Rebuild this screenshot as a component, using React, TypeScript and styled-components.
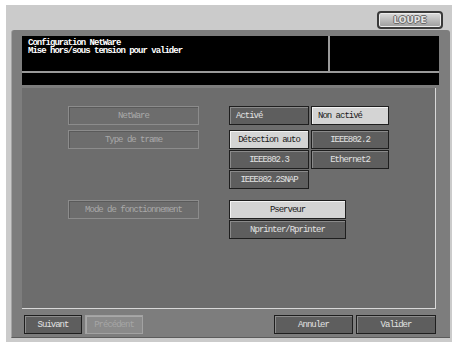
import React from "react";
import styled, { createGlobalStyle } from "styled-components";

const GlobalStyle = createGlobalStyle`
  html, body {
    margin: 0;
    padding: 0;
    background: #ffffff;
  }
  * {
    box-sizing: border-box;
  }
`;

const Page = styled.div`
  width: 457px;
  height: 342px;
  padding: 5px 5px 0 6px;
  background: #ffffff;
  font-family: "Liberation Mono", "DejaVu Sans Mono", monospace;
  font-size: 9px;
  letter-spacing: -1px;
  overflow: hidden;
`;

const Shell = styled.div`
  width: 446px;
  height: 337px;
  background: #cbcbcb;
  display: flex;
  flex-direction: column;
`;

const TopBar = styled.div`
  height: 25px;
  display: flex;
  justify-content: flex-end;
  align-items: flex-start;
  padding: 6px 9px 0 0;
`;

const ZoomButton = styled.div`
  width: 66px;
  height: 18px;
  border: 2px solid #3a3a3a;
  border-radius: 4px;
  background: linear-gradient(#dcdcdc, #9c9c9c);
  box-shadow: inset 0 0 0 1px #ececec;
  display: flex;
  align-items: center;
  justify-content: center;
  color: #e2e2e2;
  font-family: "DejaVu Sans", sans-serif;
  font-weight: bold;
  font-size: 9px;
  letter-spacing: 0;
  text-shadow: 1px 0 0 #6a6a6a, -1px 0 0 #6a6a6a, 0 1px 0 #6a6a6a, 0 -1px 0 #6a6a6a;
`;

const Frame = styled.div`
  margin-left: 5px;
  width: 439px;
  height: 308px;
  background: #7d7d7d;
  border-left: 1px solid #a4a4a4;
  border-bottom: 1px solid #5c5c5c;
  border-radius: 3px 3px 0 0;
  padding: 6px 11px 0 10px;
  display: flex;
  flex-direction: column;
`;

const Header = styled.div`
  display: grid;
  grid-template-columns: 306px 1fr;
  gap: 2px;
  background: #9a9a9a;
  height: 49px;
  grid-template-rows: 35px 12px;
`;

const HeaderCell = styled.div<{ wide?: boolean }>`
  background: #000000;
  color: #ffffff;
  padding: 3px 6px;
  line-height: 8px;
  font-weight: bold;
  white-space: pre;
  grid-column: ${({ wide }) => (wide ? "1 / 3" : "auto")};
`;

const Panel = styled.div`
  margin-top: 3px;
  width: 414px;
  height: 221px;
  background: #6d6d6d;
  border-right: 1px solid #d8d8d8;
  border-bottom: 1px solid #d8d8d8;
  padding: 18px 0 0 46px;
  display: flex;
  flex-direction: column;
`;

const Section = styled.div<{ gap: number }>`
  display: flex;
  align-items: flex-start;
  margin-top: ${({ gap }) => gap}px;
`;

const Label = styled.div`
  width: 131px;
  height: 19px;
  margin-right: 30px;
  border: 1px solid #8c8c8c;
  box-shadow: inset 1px 1px 0 #5a5a5a;
  color: #a9a9a9;
  display: flex;
  align-items: center;
  justify-content: center;
`;

const Options = styled.div<{ cols: string }>`
  display: grid;
  grid-template-columns: ${({ cols }) => cols};
  grid-auto-rows: 19px;
  column-gap: 2px;
  row-gap: 1px;
`;

const Choice = styled.div<{ on?: boolean; left?: boolean }>`
  border: 1px solid #1e1e1e;
  background: ${({ on }) => (on ? "#d4d4d4" : "#5e5e5e")};
  box-shadow: inset 1px 1px 0 ${({ on }) => (on ? "#f4f4f4" : "#8a8a8a")};
  color: ${({ on }) => (on ? "#1a1a1a" : "#e2e2e2")};
  display: flex;
  align-items: center;
  justify-content: ${({ left }) => (left ? "flex-start" : "center")};
  padding-left: ${({ left }) => (left ? "6px" : "0")};
`;

const Footer = styled.div`
  display: flex;
  align-items: center;
  margin-top: 6px;
  padding-left: 2px;
`;

const Spacer = styled.div`
  flex: 1;
`;

const FootButton = styled.div<{ w: number; disabled?: boolean }>`
  width: ${({ w }) => w}px;
  height: 19px;
  margin-right: 3px;
  border: 1px solid ${({ disabled }) => (disabled ? "#a2a2a2" : "#1e1e1e")};
  background: ${({ disabled }) => (disabled ? "#8a8a8a" : "#5e5e5e")};
  box-shadow: inset 1px 1px 0 ${({ disabled }) => (disabled ? "#a8a8a8" : "#8c8c8c")};
  color: ${({ disabled }) => (disabled ? "#a6a6a6" : "#e2e2e2")};
  display: flex;
  align-items: center;
  justify-content: center;
`;

const App = () => {
  return (
    <Page>
      <GlobalStyle />
      <Shell>
        <TopBar>
          <ZoomButton>LOUPE</ZoomButton>
        </TopBar>
        <Frame>
          <Header>
            <HeaderCell>{"Configuration NetWare\nMise hors/sous tension pour valider"}</HeaderCell>
            <HeaderCell />
            <HeaderCell wide />
          </Header>
          <Panel>
            <Section gap={0}>
              <Label>NetWare</Label>
              <Options cols="80px 78px">
                <Choice left>Activé</Choice>
                <Choice on left>Non activé</Choice>
              </Options>
            </Section>
            <Section gap={5}>
              <Label>Type de trame</Label>
              <Options cols="80px 78px">
                <Choice on>Détection auto</Choice>
                <Choice>IEEE802.2</Choice>
                <Choice>IEEE802.3</Choice>
                <Choice>Ethernet2</Choice>
                <Choice>IEEE802.2SNAP</Choice>
              </Options>
            </Section>
            <Section gap={11}>
              <Label>Mode de fonctionnement</Label>
              <Options cols="117px">
                <Choice on>Pserveur</Choice>
                <Choice>Nprinter/Rprinter</Choice>
              </Options>
            </Section>
          </Panel>
          <Footer>
            <FootButton w={58}>Suivant</FootButton>
            <FootButton w={58} disabled>
              Précédent
            </FootButton>
            <Spacer />
            <FootButton w={79}>Annuler</FootButton>
            <FootButton w={80}>Valider</FootButton>
          </Footer>
        </Frame>
      </Shell>
    </Page>
  );
};

export default App;
